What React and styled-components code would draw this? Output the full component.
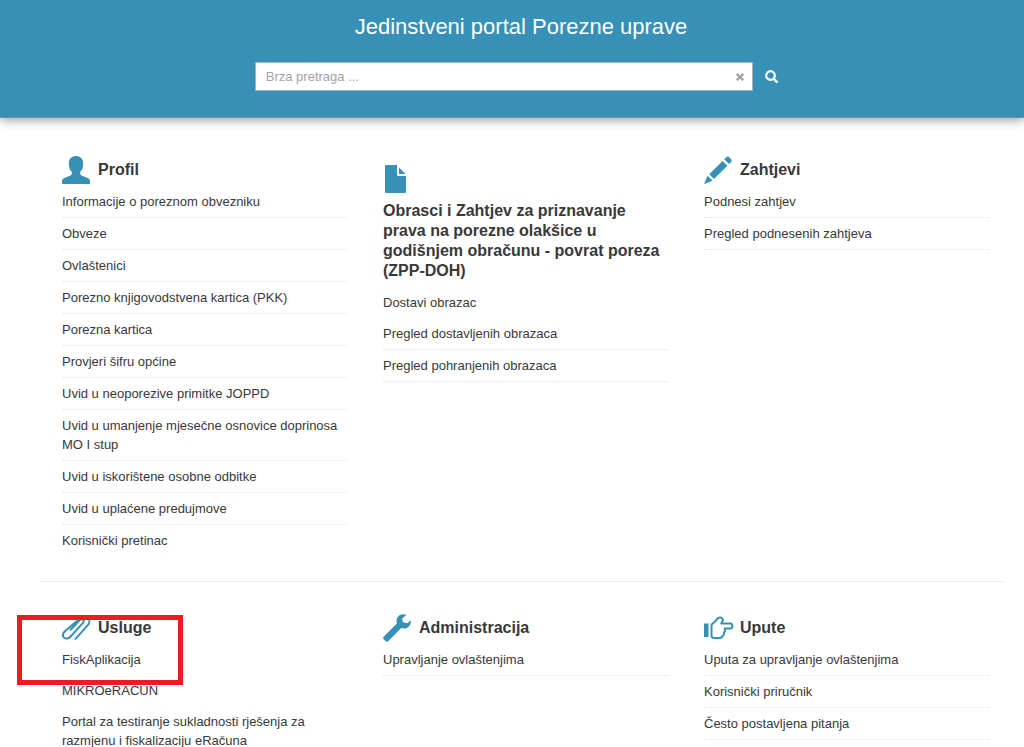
import styled, { createGlobalStyle } from "styled-components";

const GlobalStyle = createGlobalStyle`
  * {
    box-sizing: border-box;
  }

  body {
    margin: 0;
    background: #ffffff;
    color: #393939;
    font-family: "Liberation Sans", Arial, sans-serif;
    font-size: 13px;
    line-height: 19px;
  }
`;

const UserIcon = () => (
  <Icon viewBox="0 0 28 28">
    <path d="M14 0c4.200 0 7.200 2.800 7.200 7.400 0 3.600-1.200 6.800-3 8.400v1.800c0 .9.500 1.400 1.400 1.800l6 2.600c1.500.7 2.400 1.700 2.400 3.200V27c0 .6-.4 1-1 1H1c-.6 0-1-.4-1-1v-1.800c0-1.500.9-2.500 2.400-3.200l6-2.600c.9-.4 1.400-.9 1.400-1.800v-1.800c-1.800-1.600-3-4.800-3-8.400C6.800 2.800 9.800 0 14 0z" />
  </Icon>
);

const FileIcon = () => (
  <Icon viewBox="0 0 28 28">
    <path d="M3 0h11v10a1 1 0 0 0 1 1h8v16a1 1 0 0 1-1 1H3a1 1 0 0 1-1-1V1a1 1 0 0 1 1-1z" />
    <path d="M16 2.500 22.500 9H16z" />
  </Icon>
);

const PencilIcon = () => (
  <Icon viewBox="0 0 28 28">
    <path d="M22.300 1.200a2 2 0 0 1 2.800 0l2 2a2 2 0 0 1 0 2.800L25 8.100 20.200 3.300z" />
    <path d="M18.600 4.900 23.400 9.700 10 23.100 5.200 18.300z" />
    <path d="M3.600 19.800 8.500 24.700 0 28z" />
  </Icon>
);

const ClipIcon = () => (
  <Icon viewBox="0 0 28 28">
    <path
      d="M13.500 24.800 25.600 11.400c2.300-2.600 2.400-5.800.3-7.700s-5.400-1.900-7.800.6L2.900 17.200c-2.200 2.300-2.500 4.800-.9 6.400s4.400 1.300 6.400-.8L20.800 9.200c1.200-1.300 1.100-2.700.2-3.500s-2.300-.7-3.400.5L8.600 15.800"
      fill="none"
      stroke="currentColor"
      strokeWidth="2"
      strokeLinecap="round"
    />
  </Icon>
);

const WrenchIcon = () => (
  <Icon viewBox="0 0 28 28">
    <path d="M23.500.8c-3.200-1.300-6.500-.5-8.400 1.600-1.700 1.900-2 4.400-1.200 7L.8 22.500c-.9.9-.9 1.900-.1 2.700l2 2c.8.800 1.800.8 2.700-.1L18.300 14c2.500.9 5 .6 7-1 1.900-1.500 2.900-3.700 2.500-6.400l-3.500 2.600-4.300-.9-1-3.600z" />
  </Icon>
);

const HandIcon = () => (
  <Icon viewBox="0 0 28 28">
    <path d="M0 9.500h4.500V23H0z" />
    <path
      d="M7.500 11.500c0-1 .6-1.700 1.600-2.300 2.200-1.300 3.200-4 5.400-5.300 1.600-1 3.500-.2 4.300 1.100.5.900-.4 2.600-1.600 4.500h9.300c2.500 0 2.500 5 0 5h-5.800c.6 1.500.4 3-.7 4 .2 1.500-.3 2.700-1.300 3.500-.6 1.400-1.400 2-2.700 2h-5.500c-1.500 0-3-.9-3-2.500z"
      fill="none"
      stroke="currentColor"
      strokeWidth="2"
      strokeLinejoin="round"
    />
  </Icon>
);

const topSections = [
  {
    title: "Profil",
    icon: <UserIcon />,
    links: [
      { text: "Informacije o poreznom obvezniku" },
      { text: "Obveze" },
      { text: "Ovlaštenici" },
      { text: "Porezno knjigovodstvena kartica (PKK)" },
      { text: "Porezna kartica" },
      { text: "Provjeri šifru općine" },
      { text: "Uvid u neoporezive primitke JOPPD" },
      { text: "Uvid u umanjenje mjesečne osnovice doprinosa MO I stup" },
      { text: "Uvid u iskorištene osobne odbitke" },
      { text: "Uvid u uplaćene predujmove" },
      { text: "Korisnički pretinac", plain: true },
    ],
  },
  {
    title: "Obrasci i Zahtjev za priznavanje prava na porezne olakšice u godišnjem obračunu - povrat poreza (ZPP-DOH)",
    icon: <FileIcon />,
    stacked: true,
    links: [
      { text: "Dostavi obrazac", plain: true },
      { text: "Pregled dostavljenih obrazaca" },
      { text: "Pregled pohranjenih obrazaca" },
    ],
  },
  {
    title: "Zahtjevi",
    icon: <PencilIcon />,
    links: [{ text: "Podnesi zahtjev" }, { text: "Pregled podnesenih zahtjeva" }],
  },
];

const bottomSections = [
  {
    title: "Usluge",
    icon: <ClipIcon />,
    marked: true,
    links: [
      { text: "FiskAplikacija", plain: true },
      { text: "MIKROeRAČUN", plain: true },
      { text: "Portal za testiranje sukladnosti rješenja za razmjenu i fiskalizaciju eRačuna", plain: true },
    ],
  },
  {
    title: "Administracija",
    icon: <WrenchIcon />,
    links: [{ text: "Upravljanje ovlaštenjima" }],
  },
  {
    title: "Upute",
    icon: <HandIcon />,
    links: [
      { text: "Uputa za upravljanje ovlaštenjima" },
      { text: "Korisnički priručnik" },
      { text: "Često postavljena pitanja" },
    ],
  },
];

function Section({ title, icon, links, stacked, marked }) {
  return (
    <Column>
      <Heading $stacked={stacked}>
        {icon}
        <span>{title}</span>
      </Heading>
      <List>
        {links.map((link) => (
          <Item key={link.text} $plain={link.plain}>
            <Link href="#">{link.text}</Link>
          </Item>
        ))}
      </List>
      {marked && <Marker />}
    </Column>
  );
}

export default function App() {
  return (
    <>
      <GlobalStyle />
      <Header>
        <Title>Jedinstveni portal Porezne uprave</Title>
        <SearchForm role="search" onSubmit={(e) => e.preventDefault()}>
          <SearchBox>
            <SearchInput type="text" aria-label="Brza pretraga" placeholder="Brza pretraga ..." />
            <ClearButton type="reset" aria-label="Obriši">
              <svg width="8" height="8" viewBox="0 0 8 8" stroke="currentColor" strokeWidth="2.400">
                <path d="M.8.8l6.400 6.400M7.200.8.8 7.200" />
              </svg>
            </ClearButton>
          </SearchBox>
          <SearchButton type="submit" aria-label="Traži">
            <svg width="13" height="13" viewBox="0 0 13 13" fill="none" stroke="currentColor">
              <circle cx="5.500" cy="5.500" r="4.300" strokeWidth="2.200" />
              <path d="M8.800 8.800l3 3" strokeWidth="2.400" strokeLinecap="round" />
            </svg>
          </SearchButton>
        </SearchForm>
      </Header>
      <Main>
        <Grid>
          {topSections.map((section) => (
            <Section key={section.title} {...section} />
          ))}
        </Grid>
        <Divider />
        <Grid>
          {bottomSections.map((section) => (
            <Section key={section.title} {...section} />
          ))}
        </Grid>
      </Main>
    </>
  );
}

const Header = styled.header`
  display: flex;
  flex-direction: column;
  align-items: center;
  gap: 20px;
  padding: 12px 0 26px;
  background: #3790b5;
  border-bottom: 1px solid #7d929c;
  box-shadow: 0 2px 10px rgba(0, 0, 0, 0.4);
`;

const Title = styled.h1`
  margin: 0;
  padding-left: 18px;
  padding-right: 0;
  color: #ffffff;
  font-size: 22px;
  line-height: 30px;
  font-weight: 400;
`;

const SearchForm = styled.form`
  display: flex;
  align-items: center;
  gap: 12px;
  width: 52%;
  padding-left: 9px;
`;

const SearchBox = styled.div`
  display: flex;
  flex: 1;
  align-items: center;
  height: 29px;
  padding: 0 8px 0 10px;
  background: #ffffff;
  border: 1px solid #a9b4ba;
`;

const SearchInput = styled.input`
  flex: 1;
  min-width: 0;
  padding: 0;
  border: 0;
  outline: 0;
  color: #393939;
  font: inherit;

  &::placeholder {
    color: #a3a3a3;
  }
`;

const ClearButton = styled.button`
  display: flex;
  padding: 0;
  border: 0;
  background: none;
  color: #a6a6a6;
`;

const SearchButton = styled.button`
  display: flex;
  padding: 0;
  border: 0;
  background: none;
  color: #ffffff;
`;

const Main = styled.main`
  padding: 38px 21px 0 40px;
`;

const Grid = styled.div`
  display: grid;
  grid-template-columns: repeat(3, 1fr);
`;

const Column = styled.section`
  position: relative;
  padding: 0 13px 0 22px;
`;

const Heading = styled.h2`
  display: flex;
  flex-direction: ${(props) => (props.$stacked ? "column" : "row")};
  align-items: ${(props) => (props.$stacked ? "flex-start" : "center")};
  gap: 8px;
  margin: 0;
  padding: ${(props) => (props.$stacked ? "9px 0 6px" : "0 0 2px")};
  font-size: 16px;
  line-height: 20px;
  font-weight: 700;
`;

const Icon = styled.svg`
  flex: none;
  width: 28px;
  height: 28px;
  overflow: visible;
  fill: currentColor;
  color: #3790b5;
`;

const List = styled.ul`
  margin: 0;
  padding: 0;
  list-style: none;
`;

const Item = styled.li`
  padding: 6px 0;
  border-bottom: ${(props) => (props.$plain ? "0" : "1px dotted #e4e4e4")};
`;

const Link = styled.a`
  color: inherit;
  text-decoration: none;
`;

const Divider = styled.hr`
  margin: 25px 0 32px;
  border: 0;
  border-top: 1px solid #ebebeb;
`;

const Marker = styled.div`
  position: absolute;
  top: 1px;
  left: -23px;
  width: 166px;
  height: 70px;
  border: 5px solid #ed1c24;
  pointer-events: none;
`;
